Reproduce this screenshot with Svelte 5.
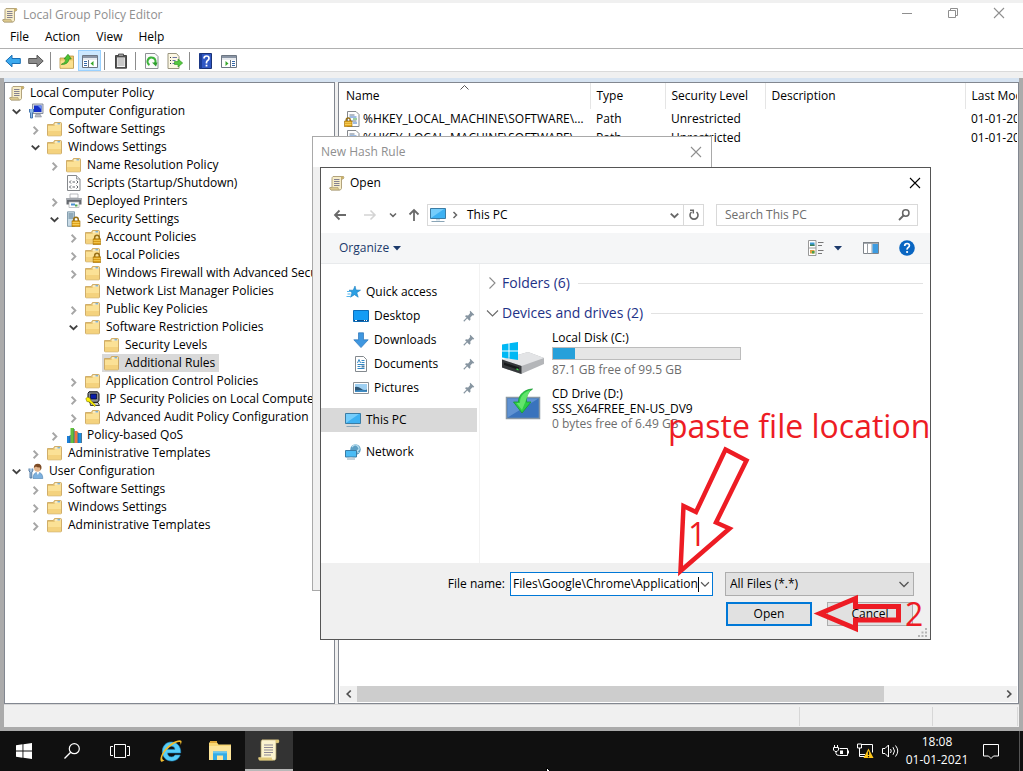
<script>
  const f = (label, icon = 'folder', state = null, kids = []) => ({ label, icon, state, kids });
  const c = 'closed';
  const o = 'expanded';

  const tree = [
    f('Computer Configuration', 'computer', o, [
      f('Software Settings', 'folder', c),
      f('Windows Settings', 'folder', o, [
        f('Name Resolution Policy', 'folder', c),
        f('Scripts (Startup/Shutdown)', 'script'),
        f('Deployed Printers', 'printer', c),
        f('Security Settings', 'server', o, [
          f('Account Policies', 'folderlock', c),
          f('Local Policies', 'folderlock', c),
          f('Windows Firewall with Advanced Security', 'folder', c),
          f('Network List Manager Policies', 'folder'),
          f('Public Key Policies', 'folder', c),
          f('Software Restriction Policies', 'folder', o, [
            f('Security Levels'),
            { ...f('Additional Rules'), selected: true }
          ]),
          f('Application Control Policies', 'folder', c),
          f('IP Security Policies on Local Computer', 'ipsec', c),
          f('Advanced Audit Policy Configuration', 'folder', c)
        ]),
        f('Policy-based QoS', 'qos', c)
      ]),
      f('Administrative Templates', 'folder', c)
    ]),
    f('User Configuration', 'user', o, [
      f('Software Settings', 'folder', c),
      f('Windows Settings', 'folder', c),
      f('Administrative Templates', 'folder', c)
    ])
  ];

  const rules = [
    ['%HKEY_LOCAL_MACHINE\\SOFTWARE\\Microsoft\\Windows NT', 'Path', 'Unrestricted', '', '01-01-2021 17:58'],
    ['%HKEY_LOCAL_MACHINE\\SOFTWARE\\Microsoft\\Windows', 'Path', 'Unrestricted', '', '01-01-2021 17:58']
  ];

  const quick = [
    ['Desktop', 'desktop'],
    ['Downloads', 'download'],
    ['Documents', 'document'],
    ['Pictures', 'picture']
  ];

  let fileName = $state('Files\\Google\\Chrome\\Application');
</script>

{#snippet icon(name, size = 16)}
  <svg class="icon" width={size} height={size} viewBox="0 0 16 16" aria-hidden="true">
    {#if name === 'scroll'}
      <path d="M4 1.500h10.500q1 1.500-.5 2.500h-1.500v9.500q-.5 1.500-2 1.500H2q-1.500-1-1-2.500h2V3.500Q3 2 4 1.500z" fill="#f7edc8" stroke="#a99a72" stroke-width=".9" />
      <path d="M12 1.500q1.500-.5 2.500.5t-1 2H12z" fill="#c9b06a" />
      <path d="M1 12.500h8q0 2 1.500 2.500H2q-1.500-1-1-2.500z" fill="#dcc88c" stroke="#a99a72" stroke-width=".6" />
      <path d="M5 4.500h5.500M5 6.500h5.500M5 8.500h5.500M5 10.500h5.500" stroke="#77758a" stroke-width=".9" />
    {:else if name === 'folder' || name === 'folderlock'}
      <path d="M.5 3.500h5.800l1.200-2h6q1 0 1 1v11.500q0 .8-.8.8H1.300q-.8 0-.8-.8z" fill="#e8c573" stroke="#c6a156" stroke-width=".8" />
      <path d="M8 2.300h5.700v1.500H7.500z" fill="#fff6d8" />
      <path d="M10.500 2.300h2.500v1h-2.500z" fill="#4f9bd4" />
      <path d="M1 5h6.200l.9-1H14v10.300H1z" fill="#fbe196" />
      <path d="M1 10h13v4.300H1z" fill="#f4d27e" />
      {#if name === 'folderlock'}
        <path d="M9.700 10V8.500a2.300 2.300 0 0 1 4.600 0V10" fill="none" stroke="#987016" stroke-width="1.500" />
        <path d="M8.200 9.800h7.500v5.900H8.200z" fill="#d99b16" stroke="#9a6c08" stroke-width=".6" />
        <path d="M8.500 11.500h7M8.500 13.500h7" stroke="#f6cd55" stroke-width=".8" />
      {/if}
    {:else if name === 'computer'}
      <path d="M4.500 1h10.500v9.500H4.500z" fill="#d9dde4" stroke="#7f8795" stroke-width=".9" />
      <path d="M6 2.500h7.500v6.500H6z" fill="#1430c8" />
      <path d="M9.500 2.500h4v4z" fill="#6f93f0" />
      <path d="M8 11h4l1.500 3H7z" fill="#b5bac4" stroke="#7d8490" stroke-width=".5" />
      <path d="M1.500 6v3l1 1v5h2v-5l1-1V6" fill="#8fb9e6" stroke="#386ca9" stroke-width=".9" />
    {:else if name === 'script'}
      <path d="M1.500.5h9L14 4v11.500H1.500z" fill="#fdfdfd" stroke="#85888c" />
      <path d="M10.500.5V4H14" fill="#e1e4e8" stroke="#85888c" stroke-width=".8" />
      <path d="M5 5.500L3.500 7 5 8.500M10.500 5.500L12 7l-1.500 1.500M6.500 7H9M5 10.500L3.500 12 5 13.500M10.500 10.500L12 12l-1.500 1.500M6.500 12H9" fill="none" stroke="#5c6068" />
    {:else if name === 'printer'}
      <path d="M4 1h8v4H4z" fill="#fff" stroke="#9b9ea3" stroke-width=".7" />
      <path d="M.5 5h15v6.500H.5z" fill="#64686e" />
      <path d="M.5 5h15v2H.5z" fill="#a3a7ad" />
      <path d="M3 9h10v5.500H3z" fill="#fff" stroke="#a9acb0" stroke-width=".7" />
      <path d="M5 10.500h4v2H5z" fill="#4a90d0" />
      <path d="M9 11.500h2.500v2H9z" fill="#52a552" />
    {:else if name === 'server'}
      <path d="M1.500.8h7v14.500h-7z" fill="#c9dbe6" stroke="#7d97a8" stroke-width=".9" />
      <path d="M2.500 3h5M2.500 5h5M2.500 7h5" stroke="#56788d" />
      <path d="M7.700 10V8.500a2.300 2.300 0 0 1 4.600 0V10" fill="none" stroke="#987016" stroke-width="1.500" />
      <path d="M6 9.800h8v5.900H6z" fill="#e2a51c" stroke="#9a6c08" stroke-width=".6" />
      <path d="M6.500 11.500h7M6.500 13.500h7" stroke="#f9d669" stroke-width=".8" />
    {:else if name === 'ipsec'}
      <path d="M4 .8h8.500l1.500 2v7l-2 1.500H4.500L3 9.500v-7z" fill="#8c9098" stroke="#111" />
      <path d="M5.500 3h6v5h-6z" fill="#0a1ea8" stroke="#000" stroke-width=".6" />
      <path d="M5 11.500h8l1.500 3h-9z" fill="#c7cad0" stroke="#111" stroke-width=".8" />
      <path d="M.8 7.500l2-1.500 2.500 1.500.5 1.800 5 5-1 1.200-5.500-4.500-2.500-.5z" fill="#fff200" stroke="#6b6500" stroke-width=".5" />
    {:else if name === 'qos'}
      <path d="M1 9h3v7H1z" fill="#1d7fd8" />
      <path d="M4.500 1h3.500v15H4.500z" fill="#62c13b" />
      <path d="M8.500 4h3v12h-3z" fill="#f0753c" />
      <path d="M12 6h3.500v10H12z" fill="#1b8ee0" />
      <path d="M4.200 8v8M8.200 2v14M11.800 5v11M15.700 6v10" stroke="#193a52" stroke-width=".7" />
    {:else if name === 'user'}
      <path d="M5 15.500q0-6 4.800-6.300 5 .3 5 6.300z" fill="#7db1df" stroke="#4c7fae" stroke-width=".6" />
      <path d="M8.500 9l1.300 3L11.500 9z" fill="#fff" />
      <circle cx="9.500" cy="5.300" r="3.400" fill="#e2b48c" />
      <path d="M5.800 5q0-4.300 4-4.300t3.700 4.500l-1 2.300-.5-3q-3.500 0-4-1z" fill="#7c4a24" />
      <path d="M1 5.500v2.500l1 1v6h1.800v-6l1-1V5.500" fill="#a9c5e0" stroke="#466f9b" stroke-width=".9" />
    {:else if name === 'rule'}
      <path d="M3.500.5h8.500L15 3.500v12H3.500z" fill="#fdfdfd" stroke="#85888c" />
      <path d="M5.500 4h5M5.500 10h7" stroke="#68788c" />
      <path d="M5.500 6h7M9 12h4" stroke="#3d79c8" />
      <path d="M9 8h4" stroke="#3aa047" />
      <path d="M2.200 10V9a2 2 0 0 1 4 0v1" fill="none" stroke="#987016" stroke-width="1.400" />
      <path d="M.5 10h7.500v5.700H.5z" fill="#e2a51c" stroke="#9a6c08" stroke-width=".6" />
      <path d="M1 11.700h6.500M1 13.500h6.500" stroke="#f9d669" stroke-width=".8" />
    {:else if name === 'back' || name === 'forward'}
      <path
        d="M.8 8L7 2.200v3.300h8.300v5H7v3.300z"
        transform={name === 'forward' ? 'matrix(-1 0 0 1 16 0)' : null}
        fill={name === 'back' ? '#3ba9ee' : '#8a8a8a'}
        stroke={name === 'back' ? '#1a6fb5' : '#555'}
      />
    {:else if name === 'upfolder'}
      <path d="M1 5h6l1-2h6.500v12.300H1z" fill="#efc96e" stroke="#b8933f" stroke-width=".8" />
      <path d="M1.500 7.500h12.500v7.300H1.500z" fill="#fbe08f" />
      <path d="M2.500 11q4-.5 4.500-5H5L9 1.200 12.300 6H10q-.5 5.500-7.500 5.500z" fill="#4cc234" stroke="#238615" stroke-width=".6" />
    {:else if name === 'pane' || name === 'actionpane'}
      <path d="M.5 2.500h15v12H.5z" fill="#fff" stroke="#6d7682" />
      <path d="M1 3h14v2H1z" fill="#8a95a5" />
      <path d="M1 5.500h14v1H1z" fill="#cfd5dc" />
      {#if name === 'pane'}
        <path d="M6.500 7v7" stroke="#6d7682" />
        <path d="M2 8.500h3M2 10.500h3M2 12.500h3" stroke="#3568a8" />
        <path d="M11.500 8v5L8.500 10.500z" fill="#38a82c" />
      {:else}
        <path d="M9.500 7v7" stroke="#6d7682" />
        <path d="M11 8.500h3M11 10.500h3M11 12.500h3" stroke="#3568a8" />
        <path d="M4.500 8v5l3-2.500z" fill="#38a82c" />
      {/if}
    {:else if name === 'clipboard'}
      <path d="M2.500 2.500h11v12.700h-11z" fill="#555" stroke="#444" />
      <path d="M4 4.500h8v9.500H4z" fill="#f4f4f4" />
      <path d="M5.500 1h5v2.500h-5z" fill="#9a9a9a" stroke="#444" stroke-width=".8" />
      <path d="M4.500 6h7M4.500 8h7M4.500 10h7M4.500 12h7" stroke="#9c9c9c" />
    {:else if name === 'refresh'}
      <path d="M1.500.5h9.500L14 3.500v12H1.500z" fill="#fafafa" stroke="#8c9094" />
      <path d="M5.500 12a4 4 0 1 1 5.500-1.500" fill="none" stroke="#3bb33a" stroke-width="2.200" />
      <path d="M8 9.500h5.500l-1.500 4z" fill="#2d9d2d" />
    {:else if name === 'export'}
      <path d="M1 .5h8.500l2.500 3v12H1z" fill="#fdf8e4" stroke="#9a957f" />
      <path d="M3 4.500h1M3 7.500h1M3 10.500h1" stroke="#333" />
      <path d="M5.500 4.500h4.500M5.500 7.500h3M5.500 10.500h3" stroke="#6d74a8" />
      <path d="M7.500 8.500H11V6l4.700 4-4.700 4v-2.500H7.500z" fill="#55c840" stroke="#2f9420" stroke-width=".6" />
    {:else if name === 'help'}
      <path d="M1.500.5h12v15h-12z" fill="#2f57c4" stroke="#1b3274" />
      <path d="M1.500.5H4v15H1.500z" fill="#1c3c94" />
      <path d="M6 5.500q0-2.500 2.500-2.500T11 5.300q0 1.500-1.300 2.200T8.500 9.500v1" fill="none" stroke="#fff" stroke-width="1.700" />
      <path d="M7.600 11.700h1.800v1.800H7.600z" fill="#fff" />
    {:else if name === 'thispc'}
      <path d="M.5 1.500h15v10H.5z" fill="#3db1f2" stroke="#3b7ca4" />
      <path d="M1 11V2h13z" fill="#75cdfb" />
      <path d="M6 12h4v1.500H6z" fill="#c4d8e4" />
      <path d="M1.500 14.500h13" stroke="#8aa5b6" />
    {:else if name === 'star'}
      <path d="M10 2l1 4 4.500.2-3.700 2.500 1.400 4.500-3.700-2.500-4 2.500 1.500-4.500L4 6.200h4.200z" fill="#2a9fe4" stroke="#1a7ec0" stroke-width=".6" />
      <path d="M2 7.500h3.500M2.500 10h3M1.500 12.500h4" stroke="#57b6ec" />
    {:else if name === 'desktop'}
      <path d="M.5 2.500h15v11H.5z" fill="#149cf5" stroke="#0b6cb8" />
      <path d="M1 12h14v1H1z" fill="#0b4a86" />
      <path d="M2 12.500h2M11 12.500h1M13 12.500h1" stroke="#fff" />
    {:else if name === 'download'}
      <path d="M5.500.8h5v7h4.700L8 15.600.8 7.800h4.700z" fill="#3f97e0" stroke="#2a73b8" stroke-width=".7" />
    {:else if name === 'document'}
      <path d="M2.500.5h8L13.500 3.500v12h-11z" fill="#fff" stroke="#83898e" />
      <path d="M4.500 7L6 3.500 7.500 7M8.500 4.500h3M8.500 6.500h3M4.500 8.500h7M4.500 10.500h3M4.500 12.500h7" fill="none" stroke="#3588c4" />
      <path d="M8.500 9.500h3v2h-3z" fill="#4c7ba0" />
    {:else if name === 'picture'}
      <path d="M.5 2.500h15v11H.5z" fill="#fff" stroke="#8d9297" />
      <path d="M2 4h12v8H2z" fill="#9fd0f2" />
      <path d="M2 7q3-1 6 1.500t6 1V12H2z" fill="#2e5675" />
      <path d="M2 10.500q6-1 12 0V12H2z" fill="#3f8cc4" />
    {:else if name === 'network'}
      <circle cx="10.500" cy="5.500" r="5.200" fill="#5d9fc4" />
      <path d="M7 3q3-4 6-.5T11 7q2.500 1 2.500 2" fill="none" stroke="#b9dfef" stroke-width="1.300" />
      <path d="M.5 6.500h11v6.500H.5z" fill="#4bbcf5" stroke="#3b7ca4" />
      <path d="M4.500 13h3v1h-3z" fill="#b9c9d3" />
      <path d="M2 15h8" stroke="#8aa5b6" />
    {:else if name === 'pin'}
      <path d="M9.500 2l4.500 4.500-1 .8-1-.3-2.500 2.800.2 2.500-1.200 1-5-5 1-1.200 2.500.2L9.300 4.500 8.800 3z" fill="#8795a1" />
      <path d="M5.500 10.500L2 14" stroke="#8795a1" stroke-width="1.300" />
    {:else if name === 'views'}
      <path d="M.5.5h7.500v15H.5zM.5 8H8" fill="#fff" stroke="#999" />
      <path d="M2 2.500h4.500v3.500H2z" fill="#3b9ad8" />
      <path d="M2 4.500h4.500V6H2z" fill="#3b7f53" />
      <path d="M2 10h4.500v3.500H2z" fill="#e0a040" />
      <path d="M4 11h2.500v2.500H4z" fill="#48a048" />
      <path d="M10 2.500h5.500M10 5.500h4M10 10.500h5.500M10 13.500h4" stroke="#777" />
    {:else if name === 'preview'}
      <path d="M.5 2.500h15v11H.5z" fill="#fff" stroke="#7f858b" />
      <path d="M0 2h16v1.700H0z" fill="#7f858b" />
      <path d="M4.500 3.500v10M9 3.500v10" stroke="#9a9fa5" />
      <path d="M9.500 4h5.500v9H9.500z" fill="#3d9be0" />
    {:else if name === 'helpround'}
      <circle cx="8" cy="8" r="7.800" fill="#0a66c2" />
      <path d="M5.700 6q0-2.500 2.400-2.500t2.300 2.100q0 1.200-1.200 1.900T8.100 9.600" fill="none" stroke="#fff" stroke-width="1.700" />
      <circle cx="8.100" cy="12" r="1.100" fill="#fff" />
    {:else if name === 'left'}
      <path d="M14 8H3M7.500 3.500L3 8l4.500 4.500" fill="none" stroke="#6a6a6a" stroke-width="1.800" />
    {:else if name === 'right'}
      <path d="M2 8h11M8.500 3.500L13 8l-4.500 4.500" fill="none" stroke="#d4d4d4" stroke-width="1.600" />
    {:else if name === 'up'}
      <path d="M8 14V3M3.500 7.500L8 3l4.500 4.500" fill="none" stroke="#6a6a6a" stroke-width="1.800" />
    {:else if name === 'reload'}
      <path d="M10.500 5a4 4 0 1 1-5 0" fill="none" stroke="#666" stroke-width="1.600" />
      <path d="M4 3.200h3.300v3.300" fill="none" stroke="#666" stroke-width="1.500" />
    {:else if name === 'search'}
      <circle cx="9.800" cy="6" r="3.200" fill="none" stroke="#666" stroke-width="1.500" />
      <path d="M7.500 8.500L3 13" stroke="#666" stroke-width="1.800" />
    {:else if name === 'close'}
      <path d="M3 3l10 10M13 3L3 13" stroke="currentColor" stroke-width="1.100" />
    {:else if name === 'minimize'}
      <path d="M3 8.500h10" stroke="currentColor" />
    {:else if name === 'restore'}
      <path d="M3.500 5.500h7v7h-7zM5.500 5.500v-2h7v7h-2" fill="none" stroke="currentColor" />
    {:else if name === 'chevdown'}
      <path d="M3.500 6L8 10.500 12.500 6" fill="none" stroke="currentColor" stroke-width="1.300" />
    {:else if name === 'chevdownbold'}
      <path d="M4 6l4 3.800L12 6" fill="none" stroke="currentColor" stroke-width="2" />
    {:else if name === 'chevrightbold'}
      <path d="M6 4l4 4-4 4" fill="none" stroke="currentColor" stroke-width="2" />
    {:else if name === 'chevleftbold'}
      <path d="M10 4L6 8l4 4" fill="none" stroke="currentColor" stroke-width="2" />
    {:else if name === 'groupright'}
      <path d="M3.500 2.500L9 8l-5.500 5.500" fill="none" stroke="#8a8a8a" stroke-width="1.100" />
    {:else if name === 'groupdown'}
      <path d="M1 5.500L6.500 11 12 5.500" fill="none" stroke="#6a6a6a" stroke-width="1.100" />
    {:else if name === 'caret'}
      <path d="M4 6h8l-4 4.500z" fill="#1c3a6b" />
    {/if}
  </svg>
{/snippet}

{#snippet node(n)}
  <li>
    <div class="row">
      <span class="twist {n.state}">
        {#if n.state}{@render icon(n.state === 'expanded' ? 'chevdownbold' : 'chevrightbold', 15)}{/if}
      </span>
      <span class="item" class:selected={n.selected}>{@render icon(n.icon)}<span>{n.label}</span></span>
    </div>
    {#if n.kids.length}
      <ul class="sub">
        {#each n.kids as k}{@render node(k)}{/each}
      </ul>
    {/if}
  </li>
{/snippet}

<div class="screen">
  <header class="titlebar">
    {@render icon('scroll')}
    <h1>Local Group Policy Editor</h1>
    <div class="winbtns">
      <button aria-label="Minimize">{@render icon('minimize')}</button>
      <button aria-label="Restore">{@render icon('restore')}</button>
      <button aria-label="Close">{@render icon('close')}</button>
    </div>
  </header>
  <nav class="menu">
    <button>File</button><button>Action</button><button>View</button><button>Help</button>
  </nav>
  <div class="toolbar">
    <button aria-label="Back">{@render icon('back')}</button>
    <button aria-label="Forward">{@render icon('forward')}</button>
    <i></i>
    <button aria-label="Up one level">{@render icon('upfolder')}</button>
    <button class="on" aria-label="Show console tree">{@render icon('pane')}</button>
    <i></i>
    <button aria-label="Properties">{@render icon('clipboard')}</button>
    <i></i>
    <button aria-label="Refresh">{@render icon('refresh')}</button>
    <button aria-label="Export list">{@render icon('export')}</button>
    <i></i>
    <button aria-label="Help">{@render icon('help')}</button>
    <button aria-label="Show action pane">{@render icon('actionpane')}</button>
  </div>
  <div class="band"></div>

  <main class="work">
    <section class="pane tree" aria-label="Console tree">
      <div class="row root"><span class="item">{@render icon('scroll')}<span>Local Computer Policy</span></span></div>
      <ul>
        {#each tree as n}{@render node(n)}{/each}
      </ul>
    </section>

    <section class="pane list" aria-label="Rules">
      <div class="tablewrap">
        <table>
          <colgroup><col class="c1" /><col class="c2" /><col class="c3" /><col class="c4" /><col /></colgroup>
          <thead>
            <tr>
              <th>Name<svg class="sort" width="9" height="5" viewBox="0 0 9 5" aria-hidden="true"><path d="M.5 4.500l4-4 4 4" fill="none" stroke="#555" /></svg></th>
              <th>Type</th><th>Security Level</th><th>Description</th><th>Last Modified</th>
            </tr>
          </thead>
          <tbody>
            {#each rules as r}
              <tr>
                <td><div class="name">{@render icon('rule')}<span>{r[0]}</span></div></td>
                <td>{r[1]}</td><td>{r[2]}</td><td>{r[3]}</td><td>{r[4]}</td>
              </tr>
            {/each}
          </tbody>
        </table>
      </div>
      <div class="hscroll">
        <button aria-label="Scroll left">{@render icon('chevleftbold', 14)}</button>
        <div class="track"><div class="thumb"></div></div>
        <button aria-label="Scroll right">{@render icon('chevrightbold', 14)}</button>
      </div>
    </section>
  </main>
  <footer class="status"><span></span><span></span><span></span></footer>

  <div class="taskbar">
    <button aria-label="Start">
      <svg width="16" height="16" viewBox="0 0 16 16"><path d="M0 2.300L6.500 1.300V7.600H0zM7.400 1.200L16 0v7.600H7.400zM0 8.400h6.500v6.300L0 13.700zM7.400 8.400H16V16l-8.600-1.200z" fill="#fff" /></svg>
    </button>
    <button aria-label="Search">
      <svg width="16" height="16" viewBox="0 0 16 16"><circle cx="10.300" cy="5.700" r="5" fill="none" stroke="#fff" stroke-width="1.200" /><path d="M6.700 9.300L.5 15.500" stroke="#fff" stroke-width="1.300" /></svg>
    </button>
    <button aria-label="Task View">
      <svg width="20" height="14" viewBox="0 0 20 14"><path d="M4.500.5h11v13h-11zM3 2.500H.5v9H3M17 2.500h2.500v9H17" fill="none" stroke="#fff" /></svg>
    </button>
    <button class="app" aria-label="Internet Explorer">
      <svg width="24" height="24" viewBox="0 0 24 24">
        <path d="M12.300 3C7 3 3.300 7.200 3.300 12.500S7 22 12.500 22c4.300 0 7.500-2.300 8.700-6h-5.200c-.7 1.200-1.900 1.900-3.500 1.900-2.300 0-3.900-1.500-4-4h13.200C22 7.500 18 3 12.300 3zM8.600 10.400c.4-1.900 1.800-3.200 3.800-3.200s3.400 1.200 3.600 3.200z" fill="#56cdf8" stroke="#1f8fca" stroke-width=".6" />
        <path d="M2 22.500C-.5 19 5 9 13 4c4-2.500 8-3.500 9.200-2.300.8.900.2 2.800-.7 4.600.2-1.700 0-3-.8-3.300C18 2 7.500 8.500 4 16c-1.300 3-1 5 1.500 5.300-1.200 1.200-2.800 1.900-3.500 1.200z" fill="#f3bd2e" />
      </svg>
    </button>
    <button class="app" aria-label="File Explorer">
      <svg width="22" height="20" viewBox="0 0 22 20">
        <path d="M0 1.500h8l1.500 2H22v15.500H0z" fill="#f8d775" />
        <path d="M1 0h7v2H1z" fill="#e0a93a" /><path d="M0 5h22v14H0z" fill="#fde59a" />
        <path d="M4 10.500h14V19h-4v-4.500H8V19H4z" fill="#32ace6" /><path d="M4 10.500h14v1.800H4z" fill="#6ac8f2" />
      </svg>
    </button>
    <button class="app active" aria-label="Local Group Policy Editor">
      <svg width="22" height="22" viewBox="0 0 22 22">
        <path d="M4 .8h16.500q1 1.200 0 3H18V18q.3 3-1.500 3.300H1.500q-1.300-1-.8-2.800H3V3Q3 1.500 4 .8z" fill="#fbf3cf" stroke="#a8975f" stroke-width=".7" />
        <path d="M17.500 1h3q1 1.200 0 2.800h-3zM.7 18.500h13q0 2 1.500 2.800H1.500q-1.300-1-.8-2.800z" fill="#dfc879" />
        <path d="M6 6h9M6 8.500h9M6 11h9M6 13.500h9M6 16h7" stroke="#8d8795" />
      </svg>
    </button>
    <div class="tray">
      <svg width="16" height="14" viewBox="0 0 16 14" role="img" aria-label="Battery">
        <path d="M6.500 4.500h8v7h-8" fill="none" stroke="#fff" /><path d="M7 6.500h3v3.500H7zM15 6.500h1v3h-1z" fill="#fff" />
        <path d="M.5 3.500h5v2.500L4 7.500H2L.5 6zM1.500 3.500V1M4.500 3.500V1M3 8v1.500q0 2 3.500 2" fill="none" stroke="#fff" />
      </svg>
      <svg width="17" height="16" viewBox="0 0 17 16" role="img" aria-label="Network">
        <path d="M4 1.500h11.500v8M3 11.500h5M5.500 13.500H8M2.500 5v8.500H6" fill="none" stroke="#fff" /><path d="M.5 1h4v4h-4z" fill="#101010" stroke="#fff" />
        <path d="M11.500 5.500L16.500 15h-10z" fill="#fcc419" /><path d="M11.500 8.500v3.500M11.500 13v1.200" stroke="#101010" stroke-width="1.200" />
      </svg>
      <svg width="17" height="14" viewBox="0 0 17 14" role="img" aria-label="Volume">
        <path d="M.5 4.500H3L6.500 1v12L3 9.500H.5zM8.500 5q1.500 2 0 4M11 3.200q3 3.800 0 7.600M13.500 1.500q4.500 5.500 0 11" fill="none" stroke="#fff" />
      </svg>
      <div class="clock"><span>18:08</span><span>01-01-2021</span></div>
      <svg width="16" height="17" viewBox="0 0 16 17" role="img" aria-label="Notifications"><path d="M.5 1.500h15v11.500H10.500L8 15.500 5.500 13H.5z" fill="none" stroke="#fff" /></svg>
    </div>
  </div>

  <section class="window hash" aria-label="New Hash Rule">
    <header><h2>New Hash Rule</h2><button aria-label="Close">{@render icon('close')}</button></header>
  </section>

  <section class="window open" aria-label="Open">
    <header>{@render icon('scroll')}<h2>Open</h2><button aria-label="Close">{@render icon('close')}</button></header>
    <div class="navrow">
      <button aria-label="Back">{@render icon('left')}</button>
      <button aria-label="Forward">{@render icon('right')}</button>
      <button class="recent" aria-label="Recent locations">{@render icon('chevdownbold', 12)}</button>
      <button aria-label="Up">{@render icon('up')}</button>
      <div class="address">
        {@render icon('thispc')}{@render icon('chevrightbold', 12)}<span>This PC</span>
        <button aria-label="Previous locations">{@render icon('chevdownbold', 15)}</button>
        <button class="reload" aria-label="Refresh">{@render icon('reload')}</button>
      </div>
      <label class="searchbox"><input type="text" placeholder="Search This PC" aria-label="Search This PC" />{@render icon('search')}</label>
    </div>
    <div class="commands">
      <button class="organize">Organize {@render icon('caret')}</button>
      <button class="end" aria-label="Change your view">{@render icon('views')}</button>
      <button class="drop" aria-label="More options">{@render icon('caret')}</button>
      <button class="prev" aria-label="Show the preview pane">{@render icon('preview')}</button>
      <button aria-label="Get help">{@render icon('helpround')}</button>
    </div>
    <div class="body">
      <nav class="places">
        <a href="#quick">{@render icon('star')}<span>Quick access</span></a>
        {#each quick as q}
          <a class="child" href="#{q[1]}">{@render icon(q[1])}<span>{q[0]}</span>{@render icon('pin', 14)}</a>
        {/each}
        <a class="gap current" href="#pc">{@render icon('thispc')}<span>This PC</span></a>
        <a class="gap" href="#network">{@render icon('network')}<span>Network</span></a>
      </nav>
      <div class="files">
        <h3>{@render icon('groupright')}<span>Folders (6)</span></h3>
        <h3>{@render icon('groupdown')}<span>Devices and drives (2)</span></h3>
        <div class="drive">
          <svg width="44" height="34" viewBox="0 0 44 34" aria-hidden="true">
            <path d="M1 17.500L27 10l16 6v6L20 32 1 25.500z" fill="#b4b6b9" />
            <path d="M1 17.500L27 10l16 6-22.500 8z" fill="#e3e4e6" />
            <path d="M1 17.500l19.500 6.500V32L1 25.500z" fill="#35383b" />
            <path d="M3 20.500l15 5v2.500L3 23z" fill="#17191b" />
            <path d="M15.500 26.200l2 .7v1.500l-2-.7z" fill="#3ce04b" />
            <path d="M1 2.500l6.500-1v7H1zM8.500 1.300L17 0v8.500H8.500zM1 9.500h6.500v7L1 15.500zM8.500 9.500H17V18l-8.500-1.300z" fill="#00b8f4" />
          </svg>
          <div class="info">
            <span>Local Disk (C:)</span>
            <div class="bar"><div style="width: 12%"></div></div>
            <span class="dim">87.1 GB free of 99.5 GB</span>
          </div>
        </div>
        <div class="drive cd">
          <svg width="44" height="34" viewBox="0 0 44 34" aria-hidden="true">
            <path d="M5.500 9.500h33v21h-33z" fill="#3973bd" stroke="#8897a5" stroke-width="1.500" />
            <path d="M6.500 29.500v-19h31z" fill="#6f9fdb" opacity=".7" />
            <path d="M31.500 1C24 1.500 17.500 6 17.500 14H12.500l8.500 11 9-11h-4.500C25 8.500 27 4 31.500 1z" fill="#2cce45" stroke="#169830" stroke-width=".8" />
            <path d="M29 2.200C22 4.500 19 9 19 15h-3.500l5.500 7z" fill="#7bee7e" opacity=".7" />
          </svg>
          <div class="info">
            <span>CD Drive (D:)</span>
            <span>SSS_X64FREE_EN-US_DV9</span>
            <span class="dim">0 bytes free of 6.49 GB</span>
          </div>
        </div>
      </div>
    </div>
    <form class="bottom" onsubmit={(e) => e.preventDefault()}>
      <label for="fname">File name:</label>
      <div class="combo">
        <input id="fname" type="text" bind:value={fileName} /><b></b>
        <button type="button" aria-label="Show file names">{@render icon('chevdown', 14)}</button>
      </div>
      <div class="type">
        <select aria-label="File type"><option>All Files (*.*)</option></select>
        {@render icon('chevdown')}
      </div>
      <div class="actions"><button type="submit" class="primary">Open</button><button type="button">Cancel</button></div>
    </form>
    <svg class="grip" width="10" height="10" viewBox="0 0 10 10" aria-hidden="true"><path d="M7 0h2v2H7zM7 3.500h2v2H7zM3.500 3.500h2v2h-2zM7 7h2v2H7zM3.500 7h2v2h-2zM0 7h2v2H0z" fill="#b5b5b5" /></svg>
  </section>

  <svg class="marks" width="270" height="240" viewBox="0 0 270 240" aria-hidden="true">
    <g fill="none" stroke="#ed1c24">
      <path d="M65.500 49.500L86.500 60.500 56 122.500l13.500 6L20.500 171l3-65 12.500 6z" stroke-width="4.500" />
      <path d="M160 213.500l35.500-15v8H238.500v13.500h-43v8.500z" stroke-width="5" />
    </g>
  </svg>
  <p class="note paste">paste file location</p>
  <p class="note one">1</p>
  <p class="note two">2</p>
  <svg class="pointer" width="10" height="14" viewBox="0 0 10 14" aria-hidden="true"><path d="M.5.500v11l3-3h5z" fill="#fff" stroke="#000" /></svg>
</div>

<style>
  :global(body) { margin: 0; background: #ababab; }
  .screen, .screen * { box-sizing: border-box; }
  .screen {
    position: relative;
    display: flex;
    flex-direction: column;
    height: 100vh;
    overflow: hidden;
    font: 12px/18px "Open Sans", "Noto Sans", sans-serif;
    color: #000;
    background: #ababab;
  }
  button, input, select { font: inherit; color: inherit; margin: 0; }
  button { display: flex; align-items: center; justify-content: center; padding: 0; border: 0; background: none; }
  h1, h2, h3, ul, p { margin: 0; padding: 0; font: inherit; }
  ul { list-style: none; }
  a { color: inherit; text-decoration: none; }
  .icon { display: block; }
  svg { flex: none; }

  .titlebar { display: flex; align-items: center; height: 27px; padding: 0 1px 0 2px; border-top: 3px solid #f0f0f0; background: #fff; color: #8f8f8f; }
  .titlebar h1 { flex: 1; padding-left: 5px; }
  .winbtns { display: flex; align-items: center; padding-bottom: 4px; }
  .winbtns button { width: 46px; height: 16px; }
  .menu { display: flex; height: 22px; padding: 0 0 2px 2px; background: #fff; border-bottom: 1px solid #b0b0b0; }
  .menu button { padding: 0 8px; }
  .toolbar { display: flex; align-items: center; height: 23px; padding: 1px 0 0 1px; background: #fff; border-bottom: 1px solid #dadada; }
  .toolbar button { width: 23px; height: 21px; }
  .toolbar .on { background: #cce8ff; border: 1px solid #99d1ff; }
  .toolbar i { width: 1px; height: 18px; margin: 0 4px 0 3px; background: #8c8c8c; }
  .band { height: 6px; background: #f0f0f0; }

  .work { display: flex; flex: 1; min-height: 0; gap: 3px; margin: 0 4px; padding-top: 4px; background: linear-gradient(#d6e3f1 4px, #f0f0f0 4px); }
  .pane { border: 1px solid #828790; background: #fff; overflow: hidden; }
  .tree { width: 331px; flex: none; padding: 1px 0 0 4px; white-space: nowrap; }
  .row { display: flex; height: 18px; }
  .twist { flex: none; width: 19px; display: flex; align-items: center; color: #404040; }
  .twist.closed { color: #a6a6a6; padding-top: 2px; }
  .sub { padding-left: 19px; }
  .item { display: flex; align-items: center; gap: 5px; padding: 0 4px 0 2px; margin-left: -2px; }
  .item.selected { background: #d9d9d9; }

  .list { flex: 1; min-width: 0; display: flex; flex-direction: column; padding: 0 1px 1px; }
  .tablewrap { flex: 1; overflow: hidden; }
  table { table-layout: fixed; width: 760px; border-collapse: collapse; }
  .c1 { width: 250px; } .c2 { width: 75px; } .c3 { width: 100px; } .c4 { width: 200px; }
  th, td { padding: 0 0 0 6px; text-align: left; font-weight: 400; white-space: nowrap; overflow: hidden; text-overflow: ellipsis; height: 19px; }
  th { position: relative; height: 26px; border-right: 1px solid #e5e5e5; }
  .sort { position: absolute; top: 2px; left: 48%; }
  td:first-child { padding-left: 4px; }
  .name { display: flex; align-items: center; gap: 3px; }
  .name span { overflow: hidden; text-overflow: ellipsis; }
  .hscroll { display: flex; height: 16px; background: #f0f0f0; color: #505050; }
  .hscroll button { width: 17px; }
  .track { flex: 1; }
  .thumb { width: 82%; height: 100%; background: #cdcdcd; }

  .status { display: flex; justify-content: flex-end; height: 23px; margin: 0 4px 4px; padding: 2px 1px 1px; background: #f0f0f0; border-top: 1px solid #d7d7d7; }
  .status span { width: 133px; border-right: 1px solid #d7d7d7; }
  .status span:last-child { width: 85px; }

  .taskbar { display: flex; height: 40px; background: #101010; color: #fff; }
  .taskbar > button { width: 48px; }
  .taskbar .app { margin-left: 1px; }
  .taskbar .app:nth-child(4) { margin-left: 3px; }
  .taskbar .active { background: #333; border-bottom: 2px solid #b8b8b8; }
  .tray { display: flex; align-items: center; gap: 8px; margin: 0 3px 0 auto; padding-right: 20px; border-right: 1px solid #555; white-space: nowrap; }
  .clock { display: flex; flex-direction: column; align-items: center; width: 60px; margin-right: 8px; }

  .window { position: absolute; display: flex; flex-direction: column; background: #f0f0f0; }
  .window header { display: flex; align-items: center; flex: none; height: 30px; background: #fff; }
  .window header h2 { flex: 1; }
  .window header button { width: 31px; height: 30px; }
  .hash { left: 312px; top: 136px; width: 400px; height: 455px; border: 1px solid #a9a9a9; color: #8f8f8f; }
  .hash header { padding-left: 8px; }
  .open { left: 320px; top: 167px; width: 611px; height: 473px; border: 1px solid #555; }
  .open header { padding-left: 8px; gap: 5px; }

  .navrow { display: flex; align-items: center; height: 35px; flex: none; padding: 0 12px 1px 11px; background: #fff; }
  .navrow > button { width: 16px; height: 22px; margin-right: 14px; }
  .navrow .recent { width: 12px; margin: 0 7px 0 -5px; }
  .navrow .recent + button { margin-right: 5px; }
  .navrow .recent, .address { color: #666; }
  .address { display: flex; align-items: center; flex: 1; height: 22px; padding-left: 2px; gap: 3px; border: 1px solid #d9d9d9; }
  .address span { flex: 1; padding-left: 3px; color: #000; }
  .address button { width: 18px; height: 20px; }
  .address .reload { border-left: 1px solid #d9d9d9; width: 20px; margin-left: -3px; }
  .searchbox { display: flex; align-items: center; width: 202px; height: 22px; margin-left: 12px; padding: 0 5px 0 8px; border: 1px solid #d9d9d9; }
  input { flex: 1; min-width: 0; padding: 0; border: 0; background: none; outline: 0; }
  input::placeholder { color: #6d6d6d; opacity: 1; }
  .commands { display: flex; align-items: center; height: 31px; flex: none; padding: 0 15px 0 18px; background: #f5f6f7; border-bottom: 1px solid #e8eaec; color: #1c3a6b; }
  .end { margin-left: auto; }
  .drop { margin: 0 17px 0 6px; }
  .prev { margin-right: 20px; }

  .body { display: flex; flex: 1; min-height: 0; background: #fff; }
  .places { width: 159px; padding: 16px 2px 0 0; border-right: 1px solid #f2f2f2; }
  .places a { display: flex; align-items: center; gap: 5px; height: 24px; padding: 0 1px 0 24px; }
  .places .child { padding-left: 32px; }
  .places .child span { flex: 1; }
  .places .gap { margin-top: 8px; }
  .places .current { background: #d9d9d9; }
  .files { flex: 1; min-width: 0; padding: 4px 7px 0 6px; }
  h3 { display: flex; align-items: center; height: 30px; font-size: 14px; color: #1e3287; }
  h3::after { content: ""; flex: 1; height: 1px; margin-left: 8px; background: #e2e2e2; }
  .drive { display: flex; gap: 7px; padding: 2px 0 0 15px; line-height: 15px; }
  .drive > svg { margin-top: 12px; }
  .cd { padding-top: 9px; }
  .cd > svg { margin-top: 2px; }
  .info { display: flex; flex-direction: column; }
  .bar { width: 189px; height: 13px; margin: 2px 0; border: 1px solid #bcbcbc; background: #e6e6e6; }
  .bar div { height: 100%; background: #26a0da; }
  .dim { color: #6d6d6d; }

  .bottom { display: grid; grid-template-columns: 1fr 203px 189px; column-gap: 12px; row-gap: 6px; height: 76px; flex: none; padding: 9px 16px 0 0; background: #f0f0f0; align-content: start; }
  .bottom > label { justify-self: end; margin-right: -7px; line-height: 24px; }
  .combo { display: flex; align-items: center; height: 24px; padding: 0 1px 0 2px; background: #fff; border: 1px solid #0078d7; }
  .combo input { field-sizing: content; flex: none; }
  .combo b { flex: none; width: 1px; height: 15px; background: #000; }
  .combo button { margin-left: auto; width: 12px; height: 22px; color: #555; }
  .type { position: relative; }
  .type select { appearance: none; width: 100%; height: 24px; padding: 0 4px; border: 1px solid #adadad; border-radius: 0; background: #e1e1e1; }
  .type :global(.icon) { position: absolute; right: 2px; top: 4px; color: #555; pointer-events: none; }
  .actions { grid-column: 3; display: flex; justify-content: space-between; padding: 0 1px; }
  .actions button { width: 86px; height: 24px; border: 1px solid #adadad; background: #e1e1e1; }
  .actions .primary { border: 2px solid #0078d7; }
  .grip { position: absolute; right: 2px; bottom: 1px; }

  .marks { position: absolute; left: 660px; top: 400px; pointer-events: none; }
  .note { position: absolute; color: #ed1c24; font-size: 32px; line-height: 40px; white-space: nowrap; }
  .paste { left: 668px; top: 406px; }
  .one { left: 688px; top: 514px; }
  .two { left: 905px; top: 594px; }
  .pointer { position: absolute; left: 546px; top: 767px; }
</style>
